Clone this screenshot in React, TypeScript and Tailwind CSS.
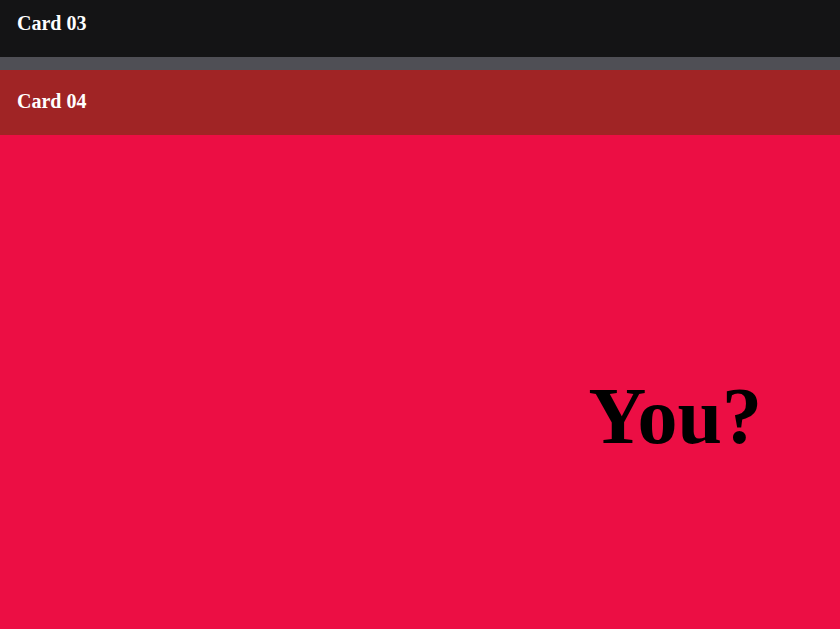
export default function App() {
  return (
    <div
      className="flex h-[629px] w-[840px] flex-col overflow-hidden"
      style={{ fontFamily: '"Liberation Serif", "Times New Roman", serif' }}
    >
      <div className="flex h-[57px] items-start bg-[#141415] px-[17px] pt-[11px]">
        <h2 className="text-[20px] font-bold leading-[24px] text-white">Card 03</h2>
      </div>
      <div className="h-[13px] bg-[#4f4f55]" />
      <div className="flex h-[65px] items-start bg-[#a02425] px-[17px] pt-[19px]">
        <h2 className="text-[20px] font-bold leading-[24px] text-white">Card 04</h2>
      </div>
      <div className="flex flex-1 justify-end bg-[#ec0e44] pr-[78px] pt-[241px]">
        <h1 className="text-[80px] font-bold leading-none text-black">You?</h1>
      </div>
    </div>
  );
}
